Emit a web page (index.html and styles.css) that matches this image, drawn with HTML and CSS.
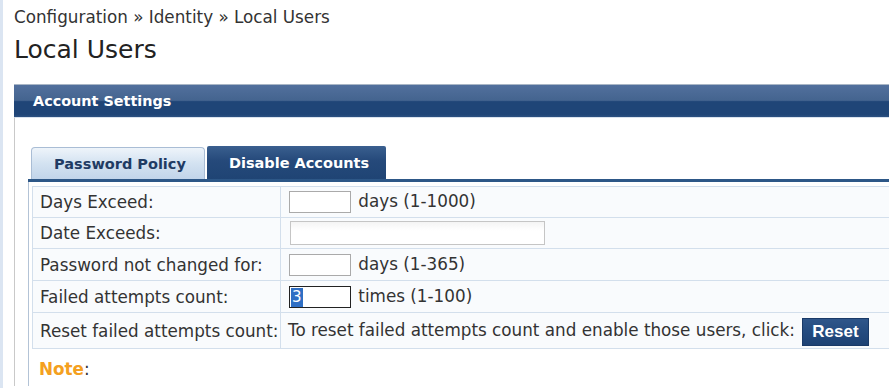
FILE: index.html
```html
<!DOCTYPE html>
<html>
<head>
<meta charset="utf-8">
<link rel="stylesheet" href="styles.css">
</head>
<body>
<div class="page">
  <div class="breadcrumb">Configuration » Identity » Local Users</div>
  <h1 class="title">Local Users</h1>
  <div class="panel">
    <div class="panel-header">Account Settings</div>
    <div class="panel-body">
      <div class="tabs">
        <div class="tab tab-inactive">Password Policy</div>
        <div class="tab tab-active">Disable Accounts</div>
      </div>
      <div class="tab-content">
        <table class="form">
          <tr class="r1">
            <td class="label">Days Exceed:</td>
            <td class="value"><span class="field"></span> days (1-1000)</td>
          </tr>
          <tr class="r2">
            <td class="label">Date Exceeds:</td>
            <td class="value"><span class="field wide"></span></td>
          </tr>
          <tr class="r3">
            <td class="label">Password not changed for:</td>
            <td class="value"><span class="field"></span> days (1-365)</td>
          </tr>
          <tr class="r3">
            <td class="label">Failed attempts count:</td>
            <td class="value"><span class="field focused"><span class="sel">3</span></span> times (1-100)</td>
          </tr>
          <tr class="last">
            <td class="label">Reset failed attempts count:</td>
            <td class="value">To reset failed attempts count and enable those users, click: <span class="btn">Reset</span></td>
          </tr>
        </table>
        <div class="note"><span class="note-key">Note</span>:</div>
      </div>
    </div>
  </div>
</div>
</body>
</html>
```
FILE: styles.css
```css
html, body {
  margin: 0;
  padding: 0;
  background: #fff;
}
body {
  font-family: "DejaVu Sans", Verdana, sans-serif;
  color: #333;
  overflow: hidden;
}
.page {
  border-left: 3px solid #dbe5f2;
  min-height: 388px;
  padding-left: 11px;
  box-sizing: border-box;
}
.breadcrumb {
  font-size: 16.8px;
  line-height: 20px;
  padding-top: 7px;
  color: #333;
}
.title {
  margin: 0;
  font-weight: normal;
  font-size: 25px;
  line-height: 30px;
  padding-top: 8px;
  color: #222;
}
.panel {
  margin-top: 19px;
}
.panel-header {
  height: 32px;
  border-top: 1px solid #a9b6c6;
  background: linear-gradient(#52709d 0%, #44648f 48%, #1f4577 52%, #1f4577 92%, #2c5181 100%);
  color: #fff;
  font-weight: bold;
  font-size: 14.4px;
  line-height: 32px;
  padding-left: 19px;
}
.panel-body {
  border-left: 1px solid #c9c9c9;
  border-top: 1px solid #d8e2ee;
  padding-left: 13px;
  padding-top: 28px;
  min-height: 240px;
}
.tabs {
  display: flex;
  gap: 2px;
  padding-left: 3px;
  height: 33px;
  align-items: flex-end;
  border-bottom: 3px solid #2d5787;
}
.tab {
  height: 32px;
  box-sizing: border-box;
  font-weight: bold;
  font-size: 14.5px;
  line-height: 32px;
  text-align: center;
  border-radius: 4px 4px 0 0;
}
.tab-inactive {
  width: 174px;
  padding-left: 4px;
  border: 1px solid #a9bdd5;
  border-bottom: none;
  color: #1f3b63;
  background: linear-gradient(#eef4fa, #d3e2f1 50%, #c1d4ea);
}
.tab-active {
  width: 179px;
  padding-left: 5px;
  height: 33px;
  line-height: 34px;
  color: #fff;
  background: linear-gradient(#3a5f8f, #25497a 45%, #1f4474);
  border-radius: 2px 2px 0 0;
}
.tab-content {
  border-left: 1px solid #b3c3d6;
  padding-left: 3px;
  padding-top: 4px;
  min-height: 200px;
}
.form {
  border-collapse: collapse;
  width: 900px;
  background: #f9fbfd;
  font-size: 16.8px;
}
.form td {
  border: 1px solid #d3dfec;
  height: 30px;
  padding: 0;
  color: #333;
  vertical-align: middle;
  white-space: nowrap;
}
.form tr.r3 td {
  height: 31px;
}
.form tr.last td {
  height: 35px;
}
.form td.label {
  width: 240px;
  padding-left: 7px;
}
.form td.value {
  padding-left: 7px;
}
.field {
  display: inline-block;
  width: 60px;
  height: 20px;
  border: 1px solid #aaa;
  background: #fff;
  vertical-align: middle;
  margin-left: 1px;
  margin-right: 2px;
  box-sizing: content-box;
}
.field.wide {
  width: 253px;
  height: 22px;
  border-color: #c5c5c5;
  background: linear-gradient(#f4f4f4, #fff 40%);
  margin-left: 2px;
}
.field.focused {
  border-color: #222;
  line-height: 20px;
  font-size: 15px;
}
.sel {
  display: inline-block;
  background: #2f6fc4;
  color: #fff;
  padding: 0 1px;
  margin-left: 1px;
  line-height: 19px;
}
.btn {
  display: inline-block;
  font-family: "Liberation Sans", Arial, sans-serif;
  font-weight: bold;
  font-size: 17px;
  color: #fff;
  background: linear-gradient(#2f568a, #244b7f 50%, #1e4274);
  border: 1px solid #1a3a68;
  padding: 0 9px;
  height: 26px;
  line-height: 26px;
  vertical-align: middle;
  margin-left: 2px;
  position: relative;
  top: 1px;
}
.note {
  font-size: 16.8px;
  padding-top: 10px;
  padding-left: 7px;
  color: #333;
}
.note-key {
  color: #f4a020;
  font-weight: bold;
}
```
